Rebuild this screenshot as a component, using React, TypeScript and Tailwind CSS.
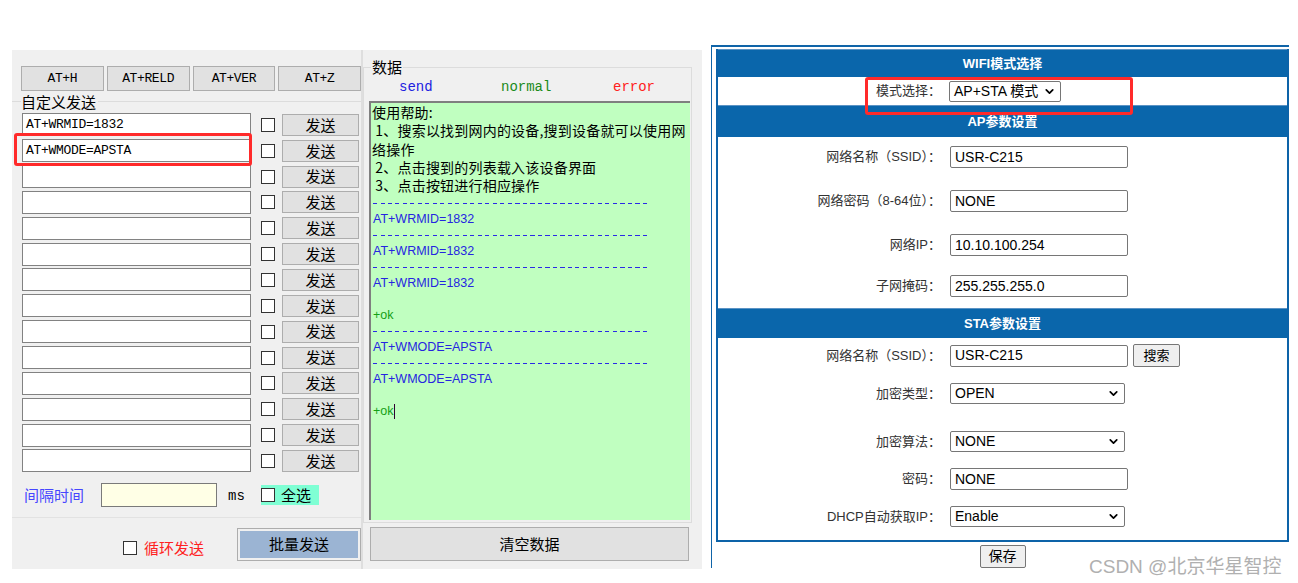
import { ChevronDown } from 'lucide-react'

const rows = ['AT+WRMID=1832', 'AT+WMODE=APSTA', '', '', '', '', '', '', '', '', '', '', '', '']

const logLines: { t: string; c?: 'send' | 'ok' | 'dash' | 'blank' }[] = [
  { t: '', c: 'dash' },
  { t: 'AT+WRMID=1832', c: 'send' },
  { t: '', c: 'dash' },
  { t: 'AT+WRMID=1832', c: 'send' },
  { t: '', c: 'dash' },
  { t: 'AT+WRMID=1832', c: 'send' },
  { t: '', c: 'blank' },
  { t: '+ok', c: 'ok' },
  { t: '', c: 'dash' },
  { t: 'AT+WMODE=APSTA', c: 'send' },
  { t: '', c: 'dash' },
  { t: 'AT+WMODE=APSTA', c: 'send' },
  { t: '', c: 'blank' },
]

function Box() {
  return <span className="block w-[14px] h-[14px] border border-[#333333] bg-white shrink-0" />
}

function Field({ value }: { value: string }) {
  return (
    <div className="h-[22px] w-[178px] border border-[#767676] rounded-[2px] bg-white flex items-center pl-[4px] text-[14px] text-black">
      {value}
    </div>
  )
}

function Select({ value, w = 175 }: { value: string; w?: number }) {
  return (
    <div
      className="h-[21px] border border-[#767676] rounded-[2px] bg-white flex items-center justify-between pl-[4px] pr-[4px] text-[14px] text-black"
      style={{ width: w }}
    >
      <span>{value}</span>
      <ChevronDown size={13} strokeWidth={3.2} />
    </div>
  )
}

function Row({ label, children, mt }: { label: string; children: React.ReactNode; mt: string }) {
  return (
    <div className={`grid grid-cols-[223px_1fr] items-center ${mt}`}>
      <div className="text-right text-[13px] text-[#333333]">{label}</div>
      <div className="pl-[9px] flex items-center gap-[5px]">{children}</div>
    </div>
  )
}

function Header({ title, h }: { title: string; h: string }) {
  return (
    <div className={`${h} bg-[#0a66ab] border-t border-[#5b93c4] flex items-center justify-center text-white text-[13px] font-bold`}>
      {title}
    </div>
  )
}

export default function App() {
  return (
    <div className="relative w-[1298px] h-[583px] bg-white overflow-hidden flex items-start">
      {/* Windows tool */}
      <div className="ml-[12px] mt-[50px] w-[690px] h-[519px] bg-[#f0f0f0] flex text-black font-['Noto_Sans_CJK_SC',sans-serif]">
        {/* left column */}
        <div className="w-[351px] h-full flex flex-col border-r-2 border-[#dedede]">
          <div className="grid grid-cols-4 gap-[3px] mt-[16px] ml-[9px] w-[340px]">
            {['AT+H', 'AT+RELD', 'AT+VER', 'AT+Z'].map((t) => (
              <div
                key={t}
                className="h-[25px] flex items-center justify-center bg-[#e1e1e1] border border-[#adadad] font-['Liberation_Mono',monospace] text-[13px] tracking-[-0.4px]"
              >
                {t}
              </div>
            ))}
          </div>
          <div className="flex items-center h-[17px] mt-[2px]">
            <div className="w-[9px] h-px bg-[#dcdcdc]" />
            <span className="text-[15px] leading-[17px]">自定义发送</span>
            <div className="flex-1 h-px bg-[#dcdcdc] ml-[2px]" />
          </div>
          <div className="flex flex-col mt-[2px]">
            {rows.map((v, i) => (
              <div key={i} className="h-[25.85px] flex items-center pl-[10px]">
                <div className="w-[229px] h-[23px] bg-white border border-[#828282] flex items-center pl-[3px] font-['Liberation_Mono',monospace] text-[13px] tracking-[-0.3px]">
                  {v}
                </div>
                <div className="ml-[10px]">
                  <Box />
                </div>
                <div className="ml-[7px] w-[77px] h-[22px] bg-[#e1e1e1] border border-[#adadad] flex items-center justify-center text-[15px]">
                  发送
                </div>
              </div>
            ))}
          </div>
          <div className="flex items-center h-[24px] mt-[9px]">
            <span className="ml-[12px] w-[77px] text-[15px] text-[#4646ff]">间隔时间</span>
            <div className="w-[116px] h-[24px] bg-[#ffffe6] border border-[#7a7a7a]" />
            <span className="ml-[11px] w-[33px] pt-[3px] font-['Liberation_Mono',monospace] text-[14px]">ms</span>
            <div className="flex items-center bg-[#7fffd4] h-[20px] w-[58px]">
              <Box />
              <span className="ml-[6px] text-[15px]">全选</span>
            </div>
          </div>
          <div className="h-px bg-[#e2e2e2] mt-[10px]" />
          <div className="flex mt-[10px]">
            <div className="ml-[111px] mt-[12px] flex items-center h-[16px]">
              <Box />
              <span className="ml-[7px] text-[15px] text-[#ff2020]">循环发送</span>
            </div>
            <div className="ml-auto w-[124px] h-[33px] border border-[#adadad] p-[2px]">
              <div className="h-full bg-[#9bb4d3] flex items-center justify-center text-[15px]">批量发送</div>
            </div>
          </div>
        </div>

        {/* data column */}
        <div className="w-[337px] h-full pt-[8px]">
          <div className="w-[329px]">
            <div className="flex h-[18px]">
              <div className="w-[8px] mt-[9px] border-t border-l border-[#dcdcdc]" />
              <span className="text-[15px] leading-[18px] px-[1px]">数据</span>
              <div className="flex-1 mt-[9px] border-t border-r border-[#dcdcdc]" />
            </div>
            <div className="border-x border-b border-[#dcdcdc] pb-[2px]">
              <div className="h-[21px] flex items-center pl-[35px] pt-[1px] font-['Liberation_Mono',monospace] text-[14px]">
                <span className="w-[102px] text-[#2020e0]">send</span>
                <span className="w-[112px] text-[#1a8a1a]">normal</span>
                <span className="text-[#ff2020]">error</span>
              </div>
              <div className="ml-[5px] mt-[4px] w-[321px] h-[419px] bg-[#c0ffc0] border-t-2 border-l-2 border-[#7f7f7f] pl-[1px]">
                <div className="text-[14px] leading-[18.3px] tracking-[0.2px] whitespace-pre">
                  <div>使用帮助:</div>
                  <div> 1、搜索以找到网内的设备,搜到设备就可以使用网</div>
                  <div>络操作</div>
                  <div> 2、点击搜到的列表载入该设备界面</div>
                  <div> 3、点击按钮进行相应操作</div>
                </div>
                <div className="pt-[1px] pl-[1px] font-['Liberation_Sans',sans-serif] text-[12.5px]">
                  {logLines.map((l, i) => (
                    <div key={i} className="h-[16px] flex items-center">
                      {l.c === 'dash' && (
                        <div className="w-[277px] h-px bg-[image:repeating-linear-gradient(90deg,#2a2ae6_0px,#2a2ae6_4px,transparent_4px,transparent_7.5px)]" />
                      )}
                      {l.c === 'send' && <span className="text-[#2525e0]">{l.t}</span>}
                      {l.c === 'ok' && <span className="text-[#15a015]">{l.t}</span>}
                    </div>
                  ))}
                  <div className="h-[16px] flex items-center">
                    <span className="text-[#15a015]">+ok</span>
                    <span className="h-[15px] border-l border-[#300030]" />
                  </div>
                </div>
              </div>
            </div>
          </div>
          <div className="ml-[7px] mt-[4px] w-[319px] h-[34px] bg-[#e1e1e1] border border-[#adadad] flex items-center justify-center text-[15px]">
            清空数据
          </div>
        </div>
      </div>

      {/* web config page */}
      <div className="ml-[9px] mt-[45px] w-[578px] h-[523px] border-t-2 border-l border-[#0f64a8] flex flex-col font-['Liberation_Sans','Noto_Sans_CJK_SC',sans-serif]">
        <div className="ml-[4px] mt-[2px] w-[573px]">
          <div className="border-x-2 border-b-2 border-[#0d63a8]">
            <Header title="WIFI模式选择" h="h-[28px]" />
            <div className="h-[28px] bg-white grid grid-cols-[223px_1fr] items-center">
              <div className="text-right text-[13px] text-[#333333]">模式选择：</div>
              <div className="pl-[8px]">
                <Select value="AP+STA 模式" w={112} />
              </div>
            </div>
            <Header title="AP参数设置" h="h-[32px]" />
            <div className="bg-white pb-[11px]">
              <Row label="网络名称（SSID）：" mt="mt-[9px]">
                <Field value="USR-C215" />
              </Row>
              <Row label="网络密码（8-64位）：" mt="mt-[22px]">
                <Field value="NONE" />
              </Row>
              <Row label="网络IP：" mt="mt-[22px]">
                <Field value="10.10.100.254" />
              </Row>
              <Row label="子网掩码：" mt="mt-[19px]">
                <Field value="255.255.255.0" />
              </Row>
            </div>
            <Header title="STA参数设置" h="h-[30px]" />
            <div className="bg-white pb-[13px]">
              <Row label="网络名称（SSID）：" mt="mt-[6px]">
                <Field value="USR-C215" />
                <div className="h-[23px] w-[47px] border border-[#767676] rounded-[2px] bg-[#efefef] flex items-center justify-center text-[13px]">
                  搜索
                </div>
              </Row>
              <Row label="加密类型：" mt="mt-[16px]">
                <Select value="OPEN" />
              </Row>
              <Row label="加密算法：" mt="mt-[27px]">
                <Select value="NONE" />
              </Row>
              <Row label="密码：" mt="mt-[16px]">
                <Field value="NONE" />
              </Row>
              <Row label="DHCP自动获取IP：" mt="mt-[16px]">
                <Select value="Enable" />
              </Row>
            </div>
          </div>
          <div className="flex justify-center mt-[3px]">
            <div className="h-[23px] w-[46px] border border-[#767676] rounded-[2px] bg-[#efefef] flex items-center justify-center text-[14px]">
              保存
            </div>
          </div>
        </div>
      </div>

      {/* highlights */}
      <div className="absolute left-[14px] top-[133px] w-[238px] h-[33px] border-[3px] border-[#ff2a2a] rounded-[3px]" />
      <div className="absolute left-[865px] top-[77px] w-[268px] h-[38px] border-[3px] border-[#ff2a2a] rounded-[3px]" />

      {/* watermark */}
      <div className="absolute left-[1089px] top-[553px] text-[19px] text-[#b0b0b0] font-['Liberation_Sans','Noto_Sans_CJK_SC',sans-serif] whitespace-nowrap">
        CSDN @北京华星智控
      </div>
    </div>
  )
}
